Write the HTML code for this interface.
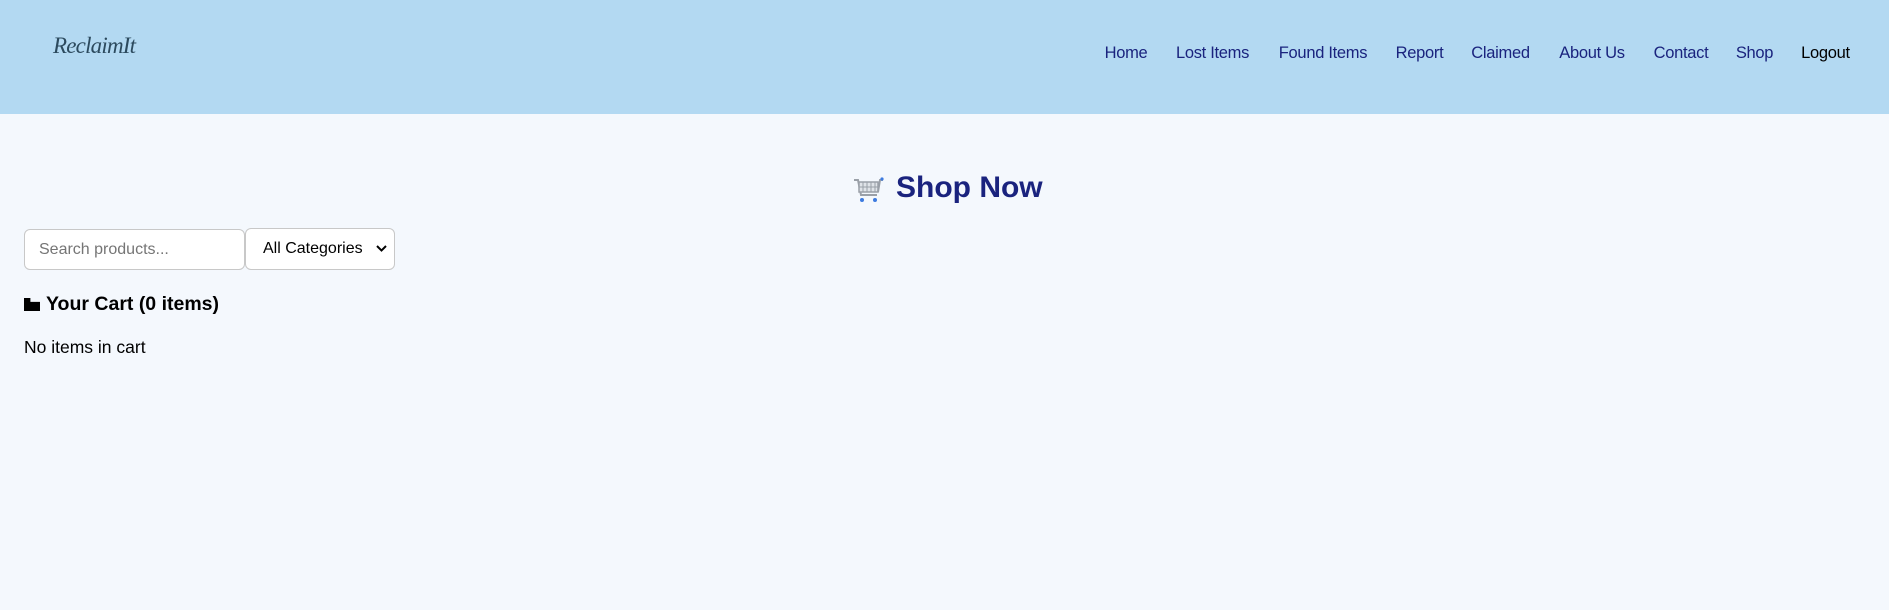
<!DOCTYPE html>
<html><head><meta charset="utf-8"><style>
*{margin:0;padding:0;box-sizing:border-box}
body{width:1889px;height:610px;background:#f4f8fd;font-family:"Liberation Sans",sans-serif;position:relative;overflow:hidden}
header{position:absolute;left:0;top:0;width:1889px;height:114px;background:#b3d9f2}
.logo{position:absolute;left:53px;top:33px;font-family:"Liberation Serif",serif;font-style:italic;font-size:23px;color:#2c4a5e;letter-spacing:-0.8px}
nav a{position:absolute;top:42px;font-size:16.5px;color:#1a237e;text-decoration:none;white-space:nowrap;line-height:22px;letter-spacing:-0.3px}
h1{position:absolute;left:896px;top:170px;font-size:30px;font-weight:bold;color:#1a237e;line-height:36px}
.cart{position:absolute;left:852px;top:176px}
input{position:absolute;left:24px;top:229px;width:221px;height:41px;border:1px solid #c8c8c8;border-radius:6px;background:#fff;font-family:"Liberation Sans",sans-serif;font-size:16px;padding-left:14px;color:#333}
input::placeholder{color:#757575}
.sel{position:absolute;left:245px;top:228px;width:150px;height:42px;border:1px solid #c8c8c8;border-radius:6px;background:#fff;font-size:16px;line-height:40px;padding-left:17px;color:#000}
.sel svg{position:absolute;right:7px;top:16px}
h3{position:absolute;left:24px;top:292px;font-size:19.5px;font-weight:bold;line-height:24px;color:#000}
.ico{display:inline-block;width:16px;height:13px;background:#000;vertical-align:-1px;margin-right:6px;clip-path:polygon(0 0,40% 0,40% 30%,100% 30%,100% 100%,0 100%)}
p{position:absolute;left:24px;top:336px;font-size:17.5px;line-height:22px;color:#000}
</style></head><body>
<header>
<div class="logo">ReclaimIt</div>
<nav>
<a style="left:1103px;width:46px;text-align:center">Home</a>
<a style="left:1174px;width:77px;text-align:center">Lost Items</a>
<a style="left:1276px;width:94px;text-align:center">Found Items</a>
<a style="left:1394px;width:51px;text-align:center">Report</a>
<a style="left:1470px;width:61px;text-align:center">Claimed</a>
<a style="left:1557px;width:70px;text-align:center">About Us</a>
<a style="left:1652px;width:58px;text-align:center">Contact</a>
<a style="left:1735px;width:39px;text-align:center">Shop</a>
<a style="left:1799px;width:53px;text-align:center;color:#000">Logout</a>
</nav>
</header>
<svg class="cart" width="32" height="28" viewBox="0 0 32 28">
<path d="M2 4h4l3 15h16" fill="none" stroke="#9aa0a8" stroke-width="2"/>
<rect x="7" y="6" width="19" height="10" fill="#dfe3e8" stroke="#9aa0a8" stroke-width="1.5"/>
<path d="M11 6v10M15 6v10M19 6v10M23 6v10M7 11h19" stroke="#9aa0a8" stroke-width="1"/>
<path d="M26 16l2-12h3" fill="none" stroke="#9aa0a8" stroke-width="2"/>
<circle cx="30" cy="3" r="1.6" fill="#3d7be0"/>
<circle cx="10" cy="24" r="2" fill="#3d7be0"/><circle cx="23" cy="24" r="2" fill="#3d7be0"/>
</svg>
<h1>Shop Now</h1>
<input placeholder="Search products...">
<div class="sel">All Categories<svg width="11" height="8" viewBox="0 0 11 8"><path d="M1 1l4.5 4.5L10 1" fill="none" stroke="#000" stroke-width="2"/></svg></div>
<h3><span class="ico"></span>Your Cart (0 items)</h3>
<p>No items in cart</p>
</body></html>
